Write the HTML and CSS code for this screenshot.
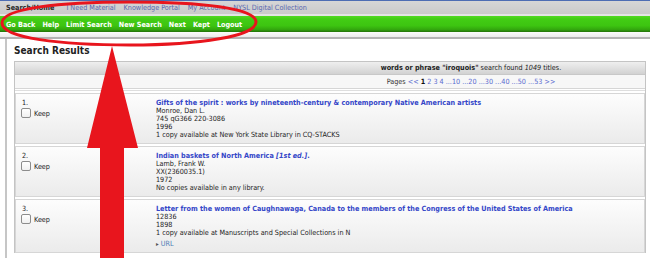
FILE: index.html
```html
<!DOCTYPE html>
<html lang="en">
<head>
<meta charset="utf-8">
<title>Search Results</title>
<link rel="stylesheet" href="styles.css">
</head>
<body>
<div class="topline"></div>
<div class="util">
  <a class="home">Search/Home</a>
  <a>I Need Material</a>
  <a>Knowledge Portal</a>
  <a>My Account</a>
  <a>NYSL Digital Collection</a>
</div>
<div class="nav">
  <a>Go Back</a><a>Help</a><a>Limit Search</a><a>New Search</a><a>Next</a><a>Kept</a><a>Logout</a>
</div>
<div class="strip"></div>
<div class="main">
  <h1>Search Results</h1>
  <div class="results">
    <div class="summary"><b>words or phrase "iroquois"</b> search found <i>1049</i> titles.</div>
    <div class="pages">Pages <a>&lt;&lt;</a> <b>1</b> <a>2</a> <a>3</a> <a>4</a> <a>...10</a> <a>...20</a> <a>...30</a> <a>...40</a> <a>...50</a> <a>...53</a> <a>&gt;&gt;</a></div>
    <div class="items">
      <div class="item">
        <div class="keepcol"><div class="num">1.</div><div class="keep"><span class="box"></span>Keep</div></div>
        <div class="rec">
          <a class="title">Gifts of the spirit : works by nineteenth-century &amp; contemporary Native American artists</a>
          <div>Monroe, Dan L.</div>
          <div>745 qG366 220-3086</div>
          <div>1996</div>
          <div>1 copy available at New York State Library in CQ-STACKS</div>
        </div>
      </div>
      <div class="item">
        <div class="keepcol"><div class="num">2.</div><div class="keep"><span class="box"></span>Keep</div></div>
        <div class="rec">
          <a class="title">Indian baskets of North America <i>[1st ed.]</i>.</a>
          <div>Lamb, Frank W.</div>
          <div>XX(2360035.1)</div>
          <div>1972</div>
          <div>No copies available in any library.</div>
        </div>
      </div>
      <div class="item">
        <div class="keepcol"><div class="num">3.</div><div class="keep"><span class="box"></span>Keep</div></div>
        <div class="rec">
          <a class="title">Letter from the women of Caughnawaga, Canada to the members of the Congress of the United States of America</a>
          <div>12836</div>
          <div>1898</div>
          <div>1 copy available at Manuscripts and Special Collections in N</div>
          <div class="url"><span class="tri">&#9656;</span> URL</div>
        </div>
      </div>
    </div>
  </div>
</div>
<svg class="annot" width="650" height="258" viewBox="0 0 650 258" aria-hidden="true">
  <path d="M 2,23 C 2,8 60,2 130,2 C 200,2 256,8 256,22 C 256,36 200,45 130,45 C 60,45 2,38 2,23 Z" fill="none" stroke="#e8151d" stroke-width="3"/>
  <polygon points="112,46 138,148 124,148 124,258 100,258 100,148 87,148" fill="#e8151d"/>
</svg>
</body>
</html>
```

FILE: styles.css
```css
* { box-sizing: border-box; }
html, body { margin: 0; padding: 0; }
body {
  width: 650px;
  height: 258px;
  overflow: hidden;
  position: relative;
  background: #fff;
  font-family: "DejaVu Sans Condensed", "DejaVu Sans", sans-serif;
  font-size: 7.2px;
  color: #222;
}
a { text-decoration: none; }

.topline { height: 1px; background: #4d6db3; }

.util {
  height: 15px;
  display: flex;
  align-items: center;
  gap: 8px;
  padding-left: 6px;
  background: linear-gradient(#d6d6d6, #cacaca);
  border-bottom: 2px solid #e4e4e4;
}
.util a { color: #5867b0; }
.util .home { color: #2a2a2a; font-weight: bold; margin-right: 4px; }

.nav {
  height: 16px;
  display: flex;
  align-items: center;
  gap: 7px;
  padding-left: 6px;
  background: linear-gradient(#52da22 0%, #42cd14 18%, #3dc511 60%, #33a80e 84%, #237008 100%);
}
.nav a { color: #fff; font-weight: bold; }

.strip {
  height: 7px;
  background: linear-gradient(#fbfbfb, #ebebeb);
  border-bottom: 2px solid #b3b3b3;
}

.main {
  margin-left: 5px;
  border-left: 2px solid #c6c6c6;
  padding: 6px 4px 0 7px;
  height: 219px;
}
.main h1 {
  margin: 0 0 4px;
  font-size: 10px;
  line-height: 12px;
  font-weight: bold;
  color: #222;
}

.results {
  border: 1px solid #c4c4c4;
  border-bottom: none;
  background: #fff;
}
.summary {
  height: 13px;
  line-height: 12px;
  padding-left: 282px;
  text-align: center;
  background: linear-gradient(#efefef, #d2d2d2);
  border-bottom: 1px solid #c8c8c8;
  color: #222;
}
.pages {
  height: 14px;
  padding: 1px 0 0 282px;
  line-height: 12px;
  text-align: center;
  background: #f7f7f7;
  border-bottom: 1px solid #d6d6d6;
  color: #333;
}
.pages a { color: #5a6cd0; }
.pages b { color: #111; }

.items {
  margin-top: 1px;
  border-top: 1px solid #dedede;
  padding-top: 2px;
}
.item {
  display: flex;
  border: 1px solid #d6d6d6;
  background: linear-gradient(#fdfdfd, #ebebeb);
  padding: 5px 0 4px 6px;
  margin-bottom: 2px;
}
.keepcol { width: 134px; flex: none; }
.num { line-height: 8px; }
.keep {
  display: flex;
  align-items: center;
  gap: 3px;
  height: 10px;
  margin-top: 1px;
}
.box {
  width: 10px;
  height: 10px;
  margin-left: -1px;
  border: 1px solid #8c8c8c;
  border-radius: 2px;
  background: linear-gradient(#ffffff, #f0f0f0);
}
.rec { line-height: 8px; }
.title { display: block; color: #3446c8; font-weight: bold; }
.url { margin-top: 3px; color: #4a7ab4; }
.url .tri { color: #555; font-size: 6px; }

.annot {
  position: absolute;
  top: 0;
  left: 0;
  pointer-events: none;
}
```
